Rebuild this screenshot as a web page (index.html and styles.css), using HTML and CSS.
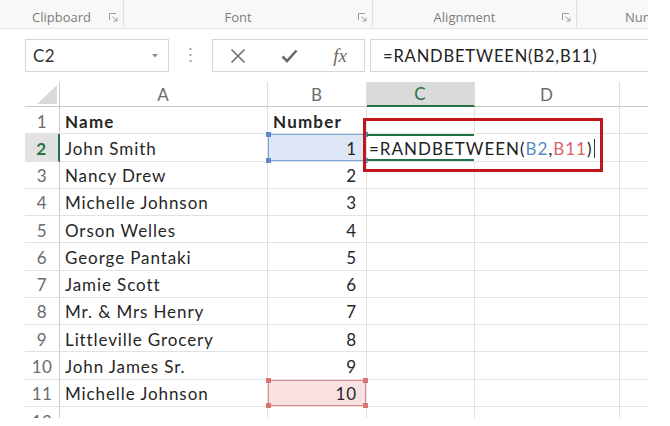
FILE: index.html
```html
<!DOCTYPE html>
<html>
<head>
<meta charset="utf-8">
<link rel="stylesheet" href="styles.css">
</head>
<body>
<div class="screen">
  <div class="ribbon">
    <div class="group g-clip"><span class="glabel">Clipboard</span><span class="launch"><svg width="9" height="9" viewBox="0 0 9 9"><path d="M0.5 7V0.5H7" fill="none" stroke="#9a9a9a"/><path d="M3.5 3.5L7.5 7.5M8 4.5V8H4.5" fill="none" stroke="#9a9a9a"/></svg></span></div>
    <div class="group g-font"><span class="glabel">Font</span><span class="launch"><svg width="9" height="9" viewBox="0 0 9 9"><path d="M0.5 7V0.5H7" fill="none" stroke="#9a9a9a"/><path d="M3.5 3.5L7.5 7.5M8 4.5V8H4.5" fill="none" stroke="#9a9a9a"/></svg></span></div>
    <div class="group g-align"><span class="glabel">Alignment</span><span class="launch"><svg width="9" height="9" viewBox="0 0 9 9"><path d="M0.5 7V0.5H7" fill="none" stroke="#9a9a9a"/><path d="M3.5 3.5L7.5 7.5M8 4.5V8H4.5" fill="none" stroke="#9a9a9a"/></svg></span></div>
    <div class="group g-num"><span class="glabel">Number</span></div>
  </div>

  <div class="fbar">
    <div class="namebox"><span>C2</span><svg class="dd" width="6" height="4" viewBox="0 0 6 4"><path d="M0 0H6L3 3.5Z" fill="#8a8a8a"/></svg></div>
    <div class="dots"><svg width="3" height="15" viewBox="0 0 3 15"><rect x="0.5" y="0" width="2" height="2" fill="#a5a5a5"/><rect x="0.5" y="6" width="2" height="2" fill="#a5a5a5"/><rect x="0.5" y="12" width="2" height="2" fill="#a5a5a5"/></svg></div>
    <div class="fbtns">
      <span class="fb fb-x"><svg width="16" height="16" viewBox="0 0 16 16"><path d="M1.5 1.5L14.5 14.5M14.5 1.5L1.5 14.5" stroke="#6f6f6f" stroke-width="1.6" fill="none"/></svg></span>
      <span class="fb fb-ok"><svg width="17" height="14" viewBox="0 0 17 14"><path d="M1.5 7.5L6 12L15.5 1.5" stroke="#6a6a6a" stroke-width="2.6" fill="none"/></svg></span>
      <span class="fb fb-fx">fx</span>
    </div>
    <div class="finput">=RANDBETWEEN(B2,B11)</div>
  </div>

  <div class="sheet">
    <div class="grid">
      <div class="c corner"><span class="tri"></span></div>
      <div class="c ch">A</div>
      <div class="c ch">B</div>
      <div class="c ch sel">C</div>
      <div class="c ch">D</div>
      <div class="c ch"></div>

      <div class="c rh">1</div>
      <div class="c b">Name</div>
      <div class="c b">Number</div>
      <div class="c"></div><div class="c"></div><div class="c"></div>

      <div class="c rh sel">2</div>
      <div class="c">John Smith</div>
      <div class="c num rng blue"><i class="k tl"></i><i class="k tr"></i><i class="k bl"></i><i class="k br"></i>1</div>
      <div class="c active"><span class="edit">=RANDBETWEEN(<span class="rb">B2</span>,<span class="rr">B11</span>)<span class="caret"></span></span></div>
      <div class="c"></div><div class="c"></div>

      <div class="c rh">3</div><div class="c">Nancy Drew</div><div class="c num">2</div><div class="c"></div><div class="c"></div><div class="c"></div>
      <div class="c rh">4</div><div class="c">Michelle Johnson</div><div class="c num">3</div><div class="c"></div><div class="c"></div><div class="c"></div>
      <div class="c rh">5</div><div class="c">Orson Welles</div><div class="c num">4</div><div class="c"></div><div class="c"></div><div class="c"></div>
      <div class="c rh">6</div><div class="c">George Pantaki</div><div class="c num">5</div><div class="c"></div><div class="c"></div><div class="c"></div>
      <div class="c rh">7</div><div class="c">Jamie Scott</div><div class="c num">6</div><div class="c"></div><div class="c"></div><div class="c"></div>
      <div class="c rh">8</div><div class="c">Mr. &amp; Mrs Henry</div><div class="c num">7</div><div class="c"></div><div class="c"></div><div class="c"></div>
      <div class="c rh">9</div><div class="c">Littleville Grocery</div><div class="c num">8</div><div class="c"></div><div class="c"></div><div class="c"></div>
      <div class="c rh">10</div><div class="c">John James Sr.</div><div class="c num">9</div><div class="c"></div><div class="c"></div><div class="c"></div>
      <div class="c rh">11</div><div class="c">Michelle Johnson</div>
      <div class="c num rng red"><i class="k tl"></i><i class="k tr"></i><i class="k bl"></i><i class="k br"></i>10</div>
      <div class="c"></div><div class="c"></div><div class="c"></div>
      <div class="c rh">12</div><div class="c"></div><div class="c num"></div><div class="c"></div><div class="c"></div><div class="c"></div>
    </div>
  </div>

  <div class="callout"></div>
</div>
</body>
</html>
```

FILE: styles.css
```css
* { box-sizing: border-box; }
html, body { margin: 0; padding: 0; background: #fff; }
body {
  width: 670px;
  height: 426px;
  overflow: hidden;
  font-family: Lato, "Open Sans", sans-serif;
}
.screen {
  position: relative;
  width: 648px;
  height: 418px;
  overflow: hidden;
  background: #fff;
}

/* Ribbon group labels */
.ribbon {
  display: flex;
  height: 29px;
  background: #f8f8f8;
  border-bottom: 1px solid #e6e6e6;
}
.group {
  display: flex;
  align-items: center;
  height: 27px;
  padding-top: 6px;
  border-right: 1px solid #e0e0e0;
  font-family: "Open Sans", sans-serif;
  font-size: 13px;
  color: #7c7c7c;
  flex-shrink: 0;
}
.glabel { flex: 1; text-align: center; white-space: nowrap; }
.launch { width: 20px; display: flex; justify-content: center; padding-top: 2px; }
.g-clip { width: 124px; padding-left: 20px; }
.g-font { width: 249px; }
.g-align { width: 204px; }
.g-num { flex: 1; border-right: 0; padding-left: 48px; }
.g-num .glabel { text-align: left; }

/* Formula bar */
.fbar {
  display: flex;
  align-items: center;
  height: 53px;
  padding-left: 25px;
}
.namebox {
  display: flex;
  align-items: center;
  width: 144px;
  height: 33px;
  border: 1px solid #d6d6d6;
  padding-left: 7px;
  font-size: 17px;
  letter-spacing: 0.5px;
  color: #333;
  flex-shrink: 0;
}
.namebox .dd { margin-left: auto; margin-right: 10px; }
.dots {
  width: 43px;
  display: flex;
  justify-content: center;
  flex-shrink: 0;
}
.fbtns {
  display: flex;
  align-items: center;
  width: 153px;
  height: 33px;
  border: 1px solid #d6d6d6;
  flex-shrink: 0;
}
.fb { display: flex; justify-content: center; align-items: center; }
.fb-x { width: 50px; }
.fb-ok { width: 54px; }
.fb-fx {
  width: 48px;
  font-family: "Liberation Serif", serif;
  font-style: italic;
  font-size: 19px;
  color: #6a6a6a;
}
.finput {
  flex: 1;
  margin-left: 5px;
  height: 33px;
  border: 1px solid #d6d6d6;
  border-right: 0;
  display: flex;
  align-items: center;
  padding-left: 12px;
  font-size: 16.5px;
  letter-spacing: 0.85px;
  color: #222;
  white-space: nowrap;
}

/* Sheet grid */
.sheet { padding-left: 25px; }
.grid {
  display: grid;
  grid-template-columns: 35px 208px 99px 108px 145px 40px;
  grid-template-rows: 25px repeat(12, 27.27px);
}
.c {
  position: relative;
  display: flex;
  align-items: center;
  padding-left: 5px;
  padding-top: 2px;
  border-right: 1px solid #e2e2e2;
  border-bottom: 1px solid #e2e2e2;
  font-size: 17px;
  letter-spacing: 0.9px;
  color: #262626;
  white-space: nowrap;
}
.b { font-weight: bold; letter-spacing: 1.2px; }
.num { justify-content: flex-end; padding-left: 0; padding-right: 9px; }

.corner { padding: 0; justify-content: flex-end; align-items: flex-end; border-right-color: #c9c9c9; border-bottom-color: #c9c9c9; }
.tri {
  width: 20px;
  height: 19px;
  margin: 0 2px 2px 0;
  background: #d9d9d9;
  clip-path: polygon(100% 0, 100% 100%, 0 100%);
}
.ch {
  justify-content: center;
  padding-left: 0;
  padding-top: 0;
  color: #6b6b6b;
  border-bottom-color: #c9c9c9;
  border-right-color: #dedede;
}
.ch.sel {
  background: #dadada;
  color: #217346;
  border-bottom: 2px solid #217346;
}
.rh {
  justify-content: center;
  padding-left: 0;
  color: #6b6b6b;
  letter-spacing: 0.5px;
  border-right-color: #c9c9c9;
}
.rh.sel {
  background: #e2e2e2;
  color: #217346;
  font-weight: bold;
  border-right: 2px solid #217346;
}

.active {
  border-right-color: transparent;
  box-shadow: inset 0 2px 0 #217346, inset 0 -2px 0 #217346;
  padding-left: 2px;
  z-index: 2;
  overflow: visible;
}
.edit { display: flex; align-items: center; font-size: 17px; letter-spacing: 1px; color: #222; }
.rb { color: #5a8ac6; }
.rr { color: #d9646a; }
.caret { display: inline-block; width: 1px; height: 19px; background: #333; margin-left: 1px; }

.rng { z-index: 1; }
.rng.blue { background: #dde7f5; box-shadow: inset 0 0 0 1px #7aa2dc; }
.rng.red { background: #fbe2e2; box-shadow: inset 0 0 0 1px #e08b8b; }
.k {
  position: absolute;
  width: 5px;
  height: 5px;
}
.blue .k { background: #5f8bcc; }
.red .k { background: #d87474; }
.k.tl { left: -2px; top: -2px; }
.k.tr { right: -2px; top: -2px; }
.k.bl { left: -2px; bottom: -2px; }
.k.br { right: -2px; bottom: -2px; }

/* annotation box */
.callout {
  position: absolute;
  left: 363px;
  top: 118px;
  width: 240px;
  height: 54px;
  border: 3px solid #c3161c;
  z-index: 5;
}
```
